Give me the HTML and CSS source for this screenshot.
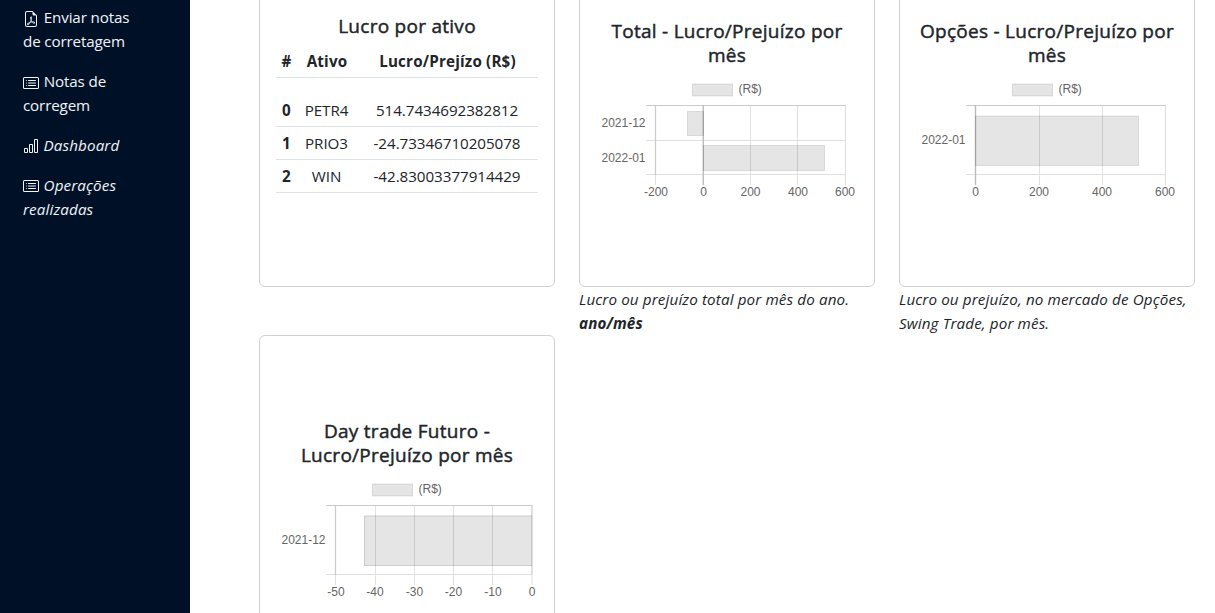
FILE: index.html
```html
<!DOCTYPE html>
<html lang="pt-BR">
<head>
<meta charset="utf-8">
<title>Dashboard</title>
<link rel="stylesheet" href="styles.css">
</head>
<body>
<div class="layout">
  <nav class="sidebar">
    <a class="nav-link"><svg class="icon" viewBox="0 0 16 16"><path d="M14 14V4.500L9.500 0H4a2 2 0 0 0-2 2v12a2 2 0 0 0 2 2h8a2 2 0 0 0 2-2zM9.500 3A1.500 1.500 0 0 0 11 4.500h2V14a1 1 0 0 1-1 1H4a1 1 0 0 1-1-1V2a1 1 0 0 1 1-1h5.500v2z"/><path d="M4.603 14.087a.81.81 0 0 1-.438-.42c-.195-.388-.13-.776.08-1.102.198-.307.526-.568.897-.787a7.680 7.680 0 0 1 1.482-.645 19.697 19.697 0 0 0 1.062-2.227 7.269 7.269 0 0 1-.43-1.295c-.086-.4-.119-.796-.046-1.136.075-.354.274-.672.65-.823.192-.077.4-.12.602-.077a.7.7 0 0 1 .477.365c.088.164.12.356.127.538.007.188-.012.396-.047.614-.084.51-.27 1.134-.52 1.794a10.954 10.954 0 0 0 .98 1.686 5.753 5.753 0 0 1 1.334.05c.364.066.734.195.96.465.12.144.193.32.2.518.007.192-.047.382-.138.563a1.040 1.040 0 0 1-.354.416.856.856 0 0 1-.51.138c-.331-.014-.654-.196-.933-.417a5.712 5.712 0 0 1-.911-.95 11.651 11.651 0 0 0-1.997.406 11.307 11.307 0 0 1-1.020 1.510c-.292.35-.609.656-.927.787a.793.793 0 0 1-.58.029zm1.379-1.901c-.166.076-.32.156-.459.238-.328.194-.541.383-.647.547-.094.145-.096.250-.040.361.010.022.020.036.026.044a.266.266 0 0 0 .035-.012c.137-.056.355-.235.635-.572a8.180 8.180 0 0 0 .45-.606zm1.640-1.330a12.710 12.710 0 0 1 1.010-.193 11.744 11.744 0 0 1-.51-.858 20.801 20.801 0 0 1-.5 1.050zm2.446.450c.150.163.296.300.435.410.240.190.407.253.498.256a.107.107 0 0 0 .070-.015.307.307 0 0 0 .094-.125.436.436 0 0 0 .059-.200.095.095 0 0 0-.026-.063c-.052-.062-.200-.152-.518-.209a3.876 3.876 0 0 0-.612-.053zM8.078 7.800a6.700 6.700 0 0 0 .200-.828c.031-.188.043-.343.038-.465a.613.613 0 0 0-.032-.198.517.517 0 0 0-.145.040c-.087.035-.158.106-.196.283-.040.192-.030.469.046.822.024.111.054.227.090.346z"/></svg> Enviar notas<br>de corretagem</a>
    <a class="nav-link"><svg class="icon" viewBox="0 0 16 16"><use href="#card-list"/></svg> Notas de<br>corregem</a>
    <a class="nav-link italic"><svg class="icon" viewBox="0 0 16 16"><path d="M4 11H2v3h2v-3zm5-4H7v7h2V7zm5-5v12h-2V2h2zm-2-1a1 1 0 0 0-1 1v12a1 1 0 0 0 1 1h2a1 1 0 0 0 1-1V2a1 1 0 0 0-1-1h-2zM6 7a1 1 0 0 1 1-1h2a1 1 0 0 1 1 1v7a1 1 0 0 1-1 1H7a1 1 0 0 1-1-1V7zm-5 4a1 1 0 0 1 1-1h2a1 1 0 0 1 1 1v3a1 1 0 0 1-1 1H2a1 1 0 0 1-1-1v-3z"/></svg> Dashboard</a>
    <a class="nav-link italic"><svg class="icon" viewBox="0 0 16 16"><g id="card-list"><path d="M14.500 3a.5.5 0 0 1 .5.5v9a.5.5 0 0 1-.5.5h-13a.5.5 0 0 1-.5-.5v-9a.5.5 0 0 1 .5-.5h13zm-13-1A1.500 1.500 0 0 0 0 3.500v9A1.500 1.500 0 0 0 1.500 14h13a1.500 1.500 0 0 0 1.500-1.500v-9A1.500 1.500 0 0 0 14.500 2h-13z"/><path d="M5 8a.5.5 0 0 1 .5-.5h7a.5.5 0 0 1 0 1h-7A.5.5 0 0 1 5 8zm0-2.500a.5.5 0 0 1 .5-.5h7a.5.5 0 0 1 0 1h-7a.5.5 0 0 1-.5-.5zm0 5a.5.5 0 0 1 .5-.5h7a.5.5 0 0 1 0 1h-7a.5.5 0 0 1-.5-.5zm-1-5a.5.5 0 1 1-1 0 .5.5 0 0 1 1 0zM4 8a.5.5 0 1 1-1 0 .5.5 0 0 1 1 0zm0 2.500a.5.5 0 1 1-1 0 .5.5 0 0 1 1 0z"/></g></svg> Operações<br>realizadas</a>
  </nav>
  <main class="content">
    <section class="item">
      <div class="card card-table">
        <h5 class="title">Lucro por ativo</h5>
        <table class="table">
          <colgroup><col class="col-index"><col class="col-asset"><col></colgroup>
          <thead><tr><th>#</th><th>Ativo</th><th>Lucro/Prejízo (R$)</th></tr></thead>
          <tbody>
            <tr class="spacer"><td colspan="3"></td></tr>
            <tr><th>0</th><td>PETR4</td><td>514.7434692382812</td></tr>
            <tr><th>1</th><td>PRIO3</td><td>-24.73346710205078</td></tr>
            <tr><th>2</th><td>WIN</td><td>-42.83003377914429</td></tr>
          </tbody>
        </table>
      </div>
    </section>
    <section class="item">
      <div class="card">
        <h5 class="title">Total - Lucro/Prejuízo por<br>mês</h5>
        <svg class="chart" viewBox="0 0 262 131">
          <rect class="bar" x="96.500" y="9" width="40" height="12"/>
          <text x="142.500" y="18">(R$)</text>
          <path class="grid" d="M107.500 30V110M154.500 30V110M201.500 30V110M249.500 30V110M50 65.500H250M50 99.500H250"/>
          <path class="axis" d="M50 30.500H250M59.500 30V100"/>
          <path class="axis zero" d="M107.250 30V110"/>
          <path class="grid" d="M59.500 100V110"/>
          <rect class="bar" x="91.500" y="36.500" width="16" height="24"/>
          <rect class="bar" x="107.500" y="70.500" width="121" height="25"/>
          <g class="end"><text x="49.500" y="52">2021-12</text><text x="49.500" y="86.500">2022-01</text></g>
          <g class="mid"><text x="60" y="121">-200</text><text x="107.500" y="121">0</text><text x="154.500" y="121">200</text><text x="202" y="121">400</text><text x="249" y="121">600</text></g>
        </svg>
      </div>
      <p class="caption">Lucro ou prejuízo total por mês do ano.<br><b>ano/mês</b></p>
    </section>
    <section class="item">
      <div class="card">
        <h5 class="title">Opções - Lucro/Prejuízo por<br>mês</h5>
        <svg class="chart" viewBox="0 0 262 131">
          <rect class="bar" x="96.500" y="9" width="40" height="12"/>
          <text x="142.500" y="18">(R$)</text>
          <path class="grid" d="M123.500 30V110M186.500 30V110M249.500 30V110M50 99.500H250"/>
          <path class="axis" d="M50 30.500H250"/>
          <path class="axis zero" d="M59.500 30V110"/>
          <rect class="bar" x="59.500" y="41" width="163" height="49.500"/>
          <g class="end"><text x="49.500" y="69">2022-01</text></g>
          <g class="mid"><text x="59.500" y="121">0</text><text x="123" y="121">200</text><text x="186" y="121">400</text><text x="249" y="121">600</text></g>
        </svg>
      </div>
      <p class="caption">Lucro ou prejuízo, no mercado de Opções,<br>Swing Trade, por mês.</p>
    </section>
    <section class="item">
      <div class="card">
        <h5 class="title">Day trade Futuro -<br>Lucro/Prejuízo por mês</h5>
        <svg class="chart" viewBox="0 0 262 131">
          <rect class="bar" x="96.500" y="9" width="40" height="12"/>
          <text x="142.500" y="18">(R$)</text>
          <path class="grid" d="M59.500 100V110M99.500 30V110M138.500 30V110M177.500 30V110M216.500 30V110M256 100V110M50 99.500H256"/>
          <path class="axis" d="M50 30.500H256M59.500 30V100M256 30V100"/>
          <path class="bar-fill" d="M88 40.500H256V91H88z"/>
          <path class="bar-line" d="M256 41H88.500V90.500H256"/>
          <g class="end"><text x="49.500" y="69">2021-12</text></g>
          <g class="mid"><text x="60" y="121">-50</text><text x="99" y="121">-40</text><text x="138.500" y="121">-30</text><text x="177.500" y="121">-20</text><text x="217" y="121">-10</text><text x="256" y="121">0</text></g>
        </svg>
      </div>
    </section>
  </main>
</div>
</body>
</html>
```
FILE: styles.css
```css
* { box-sizing: border-box; }
body {
  margin: 0;
  overflow: hidden;
  background: #fff;
  color: #212529;
  font: 15.2px/24px "Open Sans", "Noto Sans", sans-serif;
  letter-spacing: -0.15px;
}
.layout { display: flex; height: 613px; overflow: hidden; }
.sidebar {
  flex: 0 0 190px;
  display: flex;
  flex-direction: column;
  gap: 16px;
  padding: 5px 0 0 23px;
  background: #001127;
  color: #f0f4fa;
}
.nav-link { display: block; white-space: nowrap; }
.italic { font-style: italic; letter-spacing: 0.12px; }
.icon { width: 16px; height: 16px; fill: currentColor; vertical-align: -4px; margin-right: 1px; }
.italic .icon { vertical-align: -3px; margin-right: 0.5px; }
.content {
  display: grid;
  grid-template-columns: repeat(3, 296px);
  grid-auto-rows: 400px;
  column-gap: 24px;
  margin: -65px 0 0 69px;
}
.card {
  height: 352px;
  padding: 83px 16px 0;
  border: 1px solid #d0d1d2;
  border-radius: 6px;
}
.card-table { padding-top: 78px; }
.title {
  margin: 0 -10px 8px;
  font-size: 19px;
  font-weight: 500;
  line-height: 24px;
  letter-spacing: 0.27px;
  -webkit-text-stroke: 0.45px currentColor;
  text-align: center;
  white-space: nowrap;
}
.card-table .title { margin-bottom: 7px; }
.table {
  width: 262px;
  table-layout: fixed;
  border-collapse: separate;
  border-spacing: 0;
  text-align: center;
}
.col-index { width: 21px; }
.col-asset { width: 60px; }
.table th, .table td { padding: 4px 0; border-bottom: 1px solid #dee2e6; white-space: nowrap; }
.table td { padding-right: 1px; letter-spacing: -0.05px; }
.table th { letter-spacing: 0.18px; }
.table .spacer td { height: 16px; padding: 0; border: 0; }
.chart { display: block; width: 262px; height: 131px; font: 12px "Liberation Sans", Arial, sans-serif; letter-spacing: 0; fill: #666; }
.bar { fill: rgba(0, 0, 0, .1); stroke: rgba(0, 0, 0, .1); }
.bar-fill { fill: rgba(0, 0, 0, .1); }
.bar-line { fill: none; stroke: rgba(0, 0, 0, .1); }
.grid { fill: none; stroke: #e0e0e0; }
.axis { fill: none; stroke: #cbcbcb; stroke-width: 1.2; }
.zero { stroke: #bcbcbc; stroke-width: 1.4; }
.end { text-anchor: end; }
.mid { text-anchor: middle; }
.caption { margin: 0; font-style: italic; letter-spacing: 0.13px; white-space: nowrap; }
```
